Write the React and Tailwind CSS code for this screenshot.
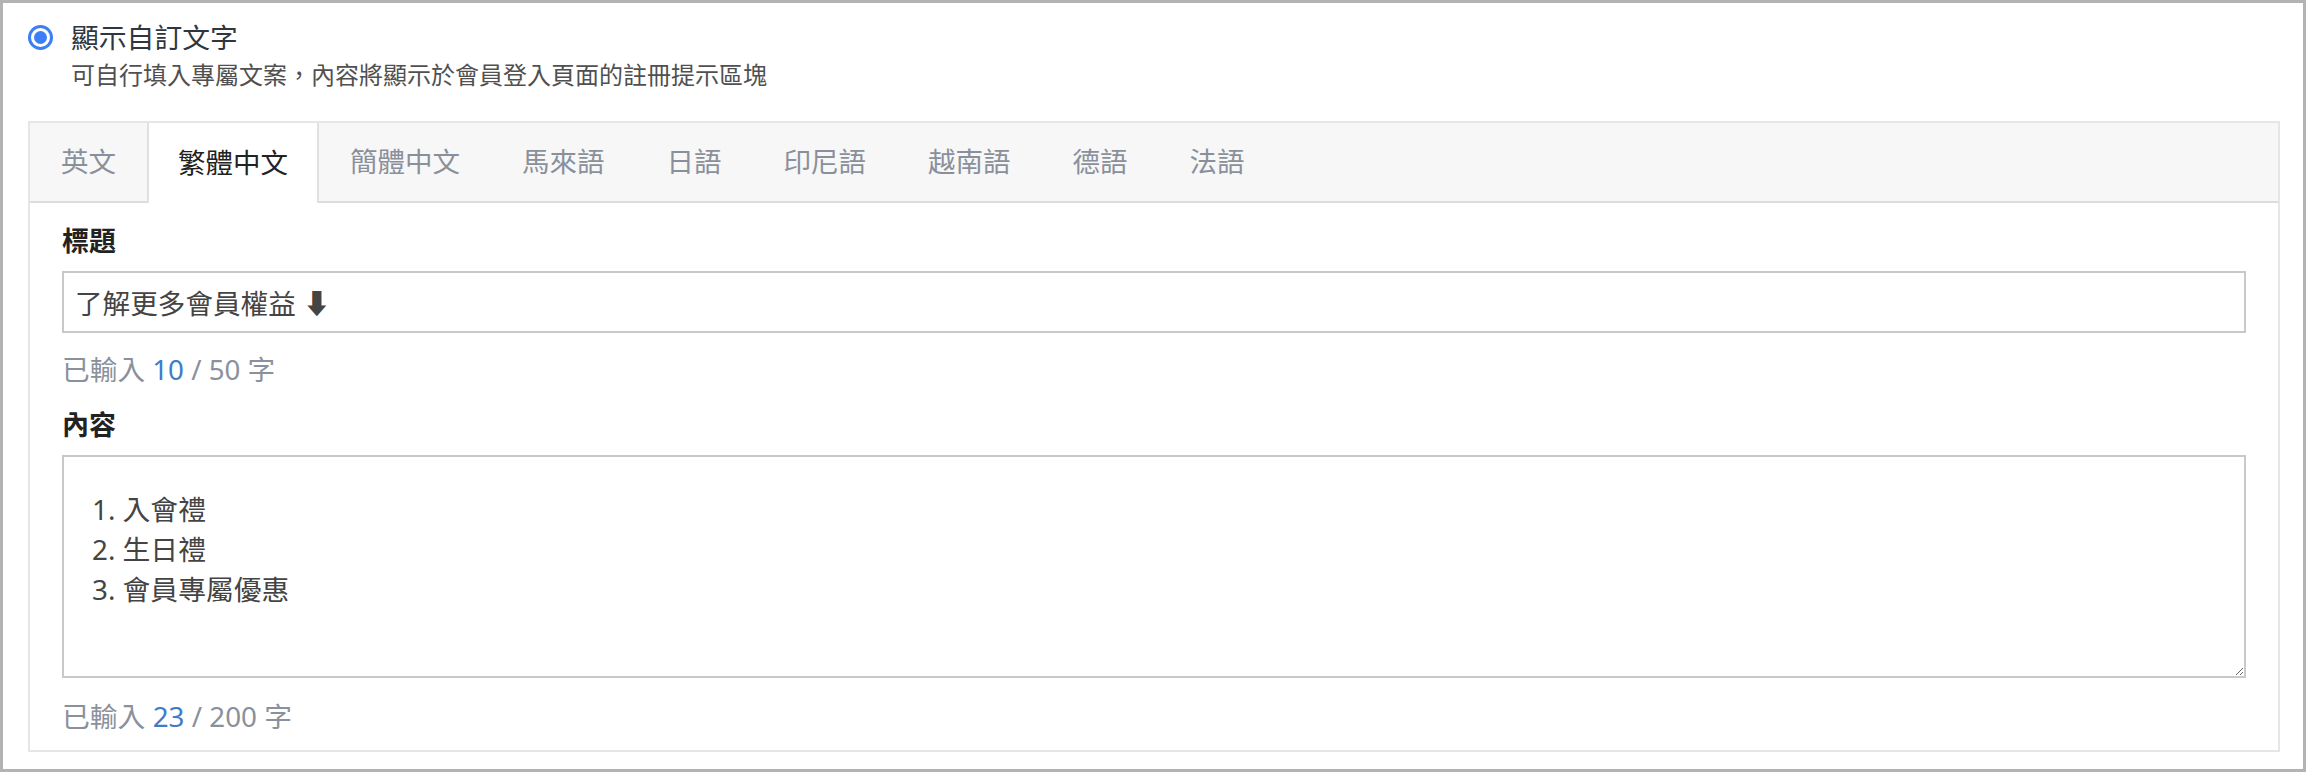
import { useState } from 'react';

const tabs = ['英文', '繁體中文', '簡體中文', '馬來語', '日語', '印尼語', '越南語', '德語', '法語'];

export default function App() {
  const [active, setActive] = useState(1);
  const [title, setTitle] = useState('了解更多會員權益 ⬇');
  const [content, setContent] = useState('1. 入會禮\n2. 生日禮\n3. 會員專屬優惠');

  return (
    <div className="w-[2306px] h-[772px] border-[3px] border-[#b3b3b3] bg-white pl-[25px] pr-[23px] pt-[15px] font-['Noto_Sans','Noto_Sans_CJK_TC','DejaVu_Sans',sans-serif]">
      <div className="flex items-center gap-[18px]">
        <span className="flex h-[25px] w-[25px] items-center justify-center rounded-full border-[3px] border-[#3b7ef6]">
          <span className="h-[13px] w-[13px] rounded-full bg-[#3b7ef6]" />
        </span>
        <span className="text-[27.8px] leading-[39px] text-[#2f3640]">顯示自訂文字</span>
      </div>
      <p className="pl-[43px] text-[24px] leading-[35px] text-[#505050]">
        可自行填入專屬文案，內容將顯示於會員登入頁面的註冊提示區塊
      </p>

      <div className="mt-[29px] border-2 border-[#e6e6e6]">
        <div className="flex h-[80px] border-b-2 border-[#dcdcdc] bg-[#f7f7f7]">
          {tabs.map((t, i) => (
            <button
              key={t}
              onClick={() => setActive(i)}
              className={
                i === active
                  ? 'relative -mb-[2px] h-[80px] border-x-2 border-[#e0e0e0] bg-white px-[29px] text-[27.5px] text-[#222]'
                  : 'h-[78px] border-x-2 border-transparent px-[29px] text-[27.5px] text-[#8a909b]'
              }
            >
              {t}
            </button>
          ))}
        </div>

        <div className="px-[32px] pt-[19px] pb-[14px]">
          <label className="block text-[27px] font-bold leading-[38px] text-[#222]">標題</label>
          <input
            className="mt-[11px] block h-[62px] w-full border-2 border-[#c9c9c9] px-[11px] text-[27.6px] text-[#444] outline-none"
            value={title}
            onChange={(e) => setTitle(e.target.value)}
          />
          <p className="mt-[16px] text-[27.7px] leading-[40px] text-[#8a919c]">
            已輸入 <span className="text-[#3d7cc9]">{title.length}</span> / 50 字
          </p>

          <label className="mt-[17px] block text-[27px] font-bold leading-[38px] text-[#222]">內容</label>
          <textarea
            className="mt-[11px] block h-[223px] w-full border-2 border-[#c9c9c9] pl-[28px] pt-[32px] text-[27.8px] leading-[40px] text-[#444] outline-none"
            value={content}
            onChange={(e) => setContent(e.target.value)}
          />
          <p className="mt-[18px] text-[27.8px] leading-[40px] text-[#8a919c]">
            已輸入 <span className="text-[#3d7cc9]">{content.length}</span> / 200 字
          </p>
        </div>
      </div>
    </div>
  );
}
